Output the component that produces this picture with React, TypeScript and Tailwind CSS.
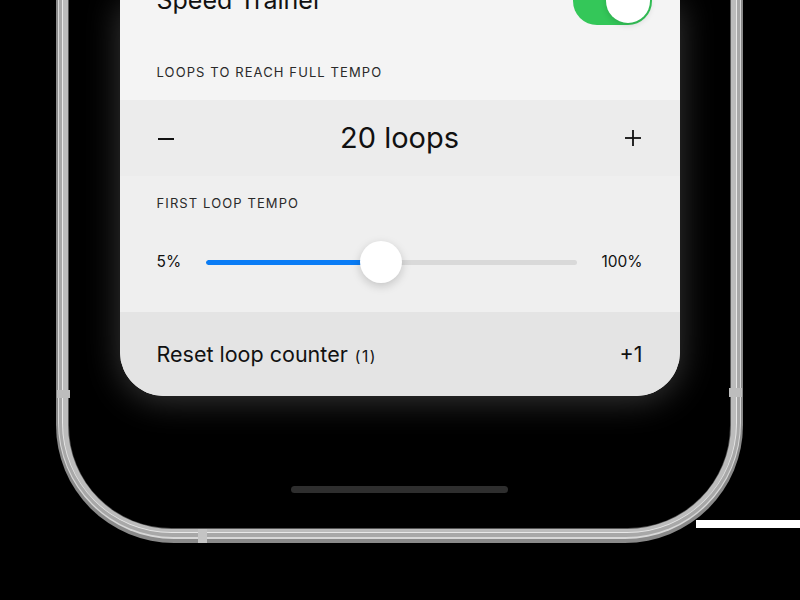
import { useState } from 'react';

const font = { fontFamily: 'Inter, "Noto Sans", sans-serif' };

function Toggle({ on }: { on: boolean }) {
  return (
    <div className={`w-[79px] h-[48px] rounded-full p-[2px] flex ${on ? 'bg-[#34c759] justify-end' : 'bg-[#e5e5ea] justify-start'}`}>
      <div className="w-[44px] h-[44px] rounded-full bg-white shadow-[0_2px_6px_rgba(0,0,0,0.15)]" />
    </div>
  );
}

function Stepper({ value }: { value: number }) {
  return (
    <div className="h-[76px] bg-[#ececec] flex items-center justify-between px-[37px]">
      <svg width="18" height="18" viewBox="0 0 18 18">
        <line x1="1" y1="10" x2="17" y2="10" stroke="#111" strokeWidth="2" />
      </svg>
      <span className="text-[29px] text-[#111]">{value} loops</span>
      <svg width="18" height="18" viewBox="0 0 18 18">
        <line x1="1" y1="9" x2="17" y2="9" stroke="#111" strokeWidth="1.8" />
        <line x1="9" y1="1" x2="9" y2="17" stroke="#111" strokeWidth="1.8" />
      </svg>
    </div>
  );
}

function TempoSlider({ pct }: { pct: number }) {
  return (
    <div className="flex items-center h-[42px] px-[37px]">
      <span className="w-[49px] text-[15.5px] text-[#111]">5%</span>
      <div className="relative w-[371px] h-[42px] flex items-center">
        <div className="w-full h-[5px] rounded-full bg-[#d9d9d9] overflow-hidden">
          <div className="h-full bg-[#0a7cf5] rounded-full" style={{ width: `${pct}%` }} />
        </div>
        <div
          className="absolute top-0 w-[42px] h-[42px] -ml-[21px] rounded-full bg-white shadow-[0_3px_10px_rgba(0,0,0,0.18)]"
          style={{ left: `${pct}%` }}
        />
      </div>
      <span className="flex-1 text-right text-[15.5px] text-[#111]">100%</span>
    </div>
  );
}

export default function App() {
  const [loops] = useState(20);
  const [tempo] = useState(47.2);

  return (
    <div className="relative w-[800px] h-[600px] bg-black overflow-hidden" style={font}>
      {/* stray bits of the photo */}
      <div className="absolute left-[696px] top-[520px] w-[104px] h-[8px] bg-white" />

      <div className="relative ml-[56px] w-[687px] h-[543px] bg-[#8a8a8a] px-[2px] pb-[4px] rounded-b-[118px]">
        <div className="h-full bg-[#d8d8d8] px-[1px] pb-[2px] rounded-b-[116px]">
          <div className="h-full bg-[#a8a8a8] px-[3px] pb-[4px] rounded-b-[114px]">
            <div className="h-full bg-[#e8e8e8] px-[1px] pb-[1px] rounded-b-[110px]">
              <div className="h-full bg-[#bcbcbc] px-[5px] pb-[3px] rounded-b-[108px]">
                <div className="h-full bg-[#555] px-[1px] pb-[1px] rounded-b-[104px]">
                  <div className="h-full bg-black rounded-b-[102px] flex flex-col items-center">
                    <div className="w-[560px] rounded-b-[44px] overflow-hidden bg-[#f4f4f4] shadow-[0_4px_34px_rgba(255,255,255,0.22)]">
                      <div className="-mt-[26px] h-[54px] flex items-center justify-between pl-[37px] pr-[28px]">
                        <span className="text-[25px] text-[#111]">Speed Trainer</span>
                        <Toggle on={true} />
                      </div>
                      <div className="pt-[36px] pb-[20px] px-[37px] text-[13px] leading-[16px] tracking-[0.085em] text-[#2a2a2a]">
                        LOOPS TO REACH FULL TEMPO
                      </div>
                      <Stepper value={loops} />
                      <div className="bg-[#efefef] pt-[19px] pb-[29px]">
                        <div className="px-[37px] text-[13px] leading-[16px] tracking-[0.085em] text-[#2a2a2a] mb-[30px]">
                          FIRST LOOP TEMPO
                        </div>
                        <TempoSlider pct={tempo} />
                      </div>
                      <div className="h-[84px] bg-[#e4e4e4] flex items-center justify-between px-[37px] text-[#111]">
                        <span className="text-[21.5px]">
                          Reset loop counter
                          <span className="ml-[7px] text-[15.5px] tracking-[0.1em]">(1)</span>
                        </span>
                        <span className="text-[21.5px]">+1</span>
                      </div>
                    </div>
                    <div className="mt-[90px] w-[217px] h-[7px] rounded-full bg-[#2e2e2e]" />
                  </div>
                </div>
              </div>
            </div>
          </div>
        </div>
        {/* antenna seams */}
        <div className="absolute left-[1px] top-[390px] w-[13px] h-[8px] bg-[#bdbdbd]" />
        <div className="absolute right-[1px] top-[388px] w-[13px] h-[9px] bg-[#bdbdbd]" />
        <div className="absolute left-[142px] bottom-0 w-[9px] h-[14px] bg-[#c4c4c4]" />
      </div>
    </div>
  );
}
